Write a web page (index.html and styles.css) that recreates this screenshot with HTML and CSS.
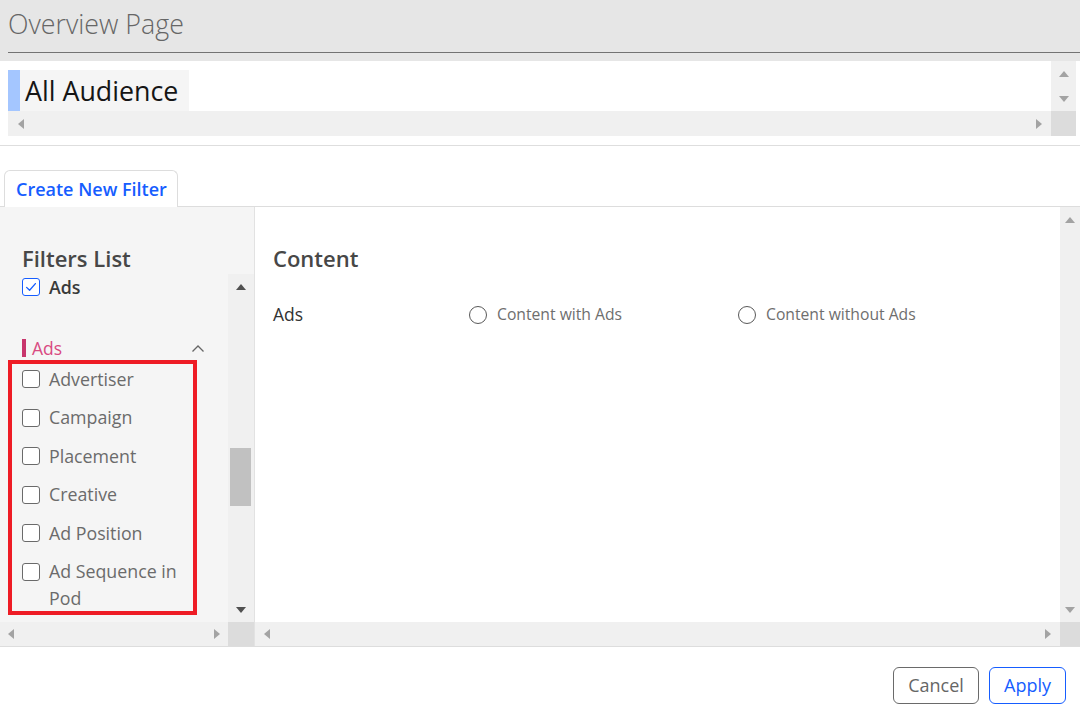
FILE: index.html
```html
<!DOCTYPE html>
<html lang="en">
<head>
<meta charset="utf-8">
<title>Overview Page</title>
<link rel="stylesheet" href="styles.css">
</head>
<body>
<header class="page-head">
  <h1 class="page-title">Overview Page</h1>
</header>

<section class="scroller audience">
  <div class="audience-view"><span class="tag">All Audience</span></div>
  <div class="vbar">
    <span class="btn btn-v"><i class="arrow up"></i></span>
    <span class="btn btn-v"><i class="arrow down"></i></span>
  </div>
  <div class="hbar">
    <span class="btn btn-h"><i class="arrow left"></i></span>
    <span class="btn btn-h"><i class="arrow right"></i></span>
  </div>
  <div class="corner"></div>
</section>

<div class="divider"></div>

<nav class="tabs">
  <button class="tab" type="button">Create New Filter</button>
</nav>

<div class="panel">
  <aside class="sidebar">
    <h2 class="section-title">Filters List</h2>
    <div class="scroller side-scroller">
      <div class="side-list">
        <label class="check-row selected">
          <span class="box checked"><svg viewBox="0 0 18 18" width="18" height="18"><path d="M4.6 9.4 L7.6 12.3 L13.4 5.6" fill="none" stroke="#165dff" stroke-width="1.3" stroke-linecap="round" stroke-linejoin="round"/></svg></span>
          <span class="check-text">Ads</span>
        </label>

        <div class="group-head">
          <span class="group-name">Ads</span>
          <svg class="chevron" viewBox="0 0 14 9" width="14" height="9"><polyline points="1.5,7.5 7,2 12.5,7.5" fill="none" stroke="#666" stroke-width="1.3"/></svg>
        </div>

        <ul class="options">
          <li class="check-row"><span class="box"></span><span class="check-text">Advertiser</span></li>
          <li class="check-row"><span class="box"></span><span class="check-text">Campaign</span></li>
          <li class="check-row"><span class="box"></span><span class="check-text">Placement</span></li>
          <li class="check-row"><span class="box"></span><span class="check-text">Creative</span></li>
          <li class="check-row"><span class="box"></span><span class="check-text">Ad Position</span></li>
          <li class="check-row"><span class="box"></span><span class="check-text">Ad Sequence in Pod</span></li>
        </ul>
      </div>
      <div class="vbar side-vbar">
        <span class="btn btn-v"><i class="arrow up dark"></i></span>
        <span class="track"><span class="thumb"></span></span>
        <span class="btn btn-v"><i class="arrow down dark"></i></span>
      </div>
      <div class="hbar">
        <span class="btn btn-h"><i class="arrow left"></i></span>
        <span class="btn btn-h"><i class="arrow right"></i></span>
      </div>
      <div class="corner"></div>
    </div>
    <div class="highlight"></div>
  </aside>

  <main class="scroller main-scroller">
    <div class="main-view">
      <h2 class="section-title">Content</h2>
      <div class="field-row">
        <span class="field-label">Ads</span>
        <label class="radio-opt"><span class="radio"></span>Content with Ads</label>
        <label class="radio-opt"><span class="radio"></span>Content without Ads</label>
      </div>
    </div>
    <div class="vbar main-vbar">
      <span class="btn btn-v"><i class="arrow up"></i></span>
      <span class="btn btn-v"><i class="arrow down"></i></span>
    </div>
    <div class="hbar">
      <span class="btn btn-h"><i class="arrow left"></i></span>
      <span class="btn btn-h"><i class="arrow right"></i></span>
    </div>
    <div class="corner"></div>
  </main>
</div>

<footer class="actions">
  <button class="action cancel" type="button">Cancel</button>
  <button class="action apply" type="button">Apply</button>
</footer>
</body>
</html>
```

FILE: styles.css
```css
* {
  box-sizing: border-box;
}

html, body {
  margin: 0;
  padding: 0;
  background: #fff;
}

body {
  width: 1080px;
  height: 712px;
  overflow: hidden;
  font-family: "Open Sans", "Noto Sans", sans-serif;
  color: #333;
}

button {
  font-family: inherit;
  cursor: pointer;
}

/* ---------- page heading ---------- */
.page-head {
  height: 61px;
  background: #e6e6e6;
  padding-left: 8px;
}

.page-title {
  margin: 0;
  height: 53px;
  border-bottom: 1px solid #737373;
  font-size: 26.8px;
  font-weight: 300;
  line-height: 48px;
  color: #666;
}

/* ---------- generic scroll frame ---------- */
.scroller {
  display: grid;
}

.vbar {
  background: #f0f0f0;
  display: flex;
  flex-direction: column;
  justify-content: space-between;
}

.hbar {
  background: #f0f0f0;
  display: flex;
  justify-content: space-between;
}

.corner {
  background: #dcdcdc;
}

.btn {
  display: flex;
  align-items: center;
  justify-content: center;
}

.btn-v {
  height: 25px;
}

.btn-h {
  width: 24px;
}

.arrow {
  display: block;
  width: 0;
  height: 0;
  border: 0 solid transparent;
}

.arrow.up {
  border-width: 0 5.5px 6px;
  border-bottom-color: #a3a3a3;
}

.arrow.down {
  border-width: 6px 5.5px 0;
  border-top-color: #a3a3a3;
}

.arrow.left {
  border-width: 5.5px 6px 5.5px 0;
  border-right-color: #a3a3a3;
}

.arrow.right {
  border-width: 5.5px 0 5.5px 6px;
  border-left-color: #a3a3a3;
}

.arrow.up.dark {
  border-bottom-color: #505050;
}

.arrow.down.dark {
  border-top-color: #505050;
}

/* ---------- audience selector ---------- */
.audience {
  margin: 0 4px 0 8px;
  height: 75px;
  grid-template-columns: 1fr 25px;
  grid-template-rows: 50px 25px;
}

.audience-view {
  background: #fff;
  padding-top: 9px;
}

.tag {
  display: inline-block;
  height: 41px;
  padding: 0 11px 0 5px;
  border-left: 12px solid #a4c6ff;
  background: #f5f5f5;
  font-size: 26.8px;
  line-height: 41px;
  color: #151515;
}

.audience .hbar .btn-h {
  width: 25px;
}

.divider {
  margin-top: 9px;
  height: 1px;
  background: #dedede;
}

/* ---------- tabs ---------- */
.tabs {
  margin-top: 24px;
  padding-left: 4px;
  border-bottom: 1px solid #dddddd;
  height: 37px;
  display: flex;
}

.tab {
  width: 174px;
  height: 37px;
  padding: 0 0 0 11px;
  text-align: left;
  border: 1px solid #dddddd;
  border-bottom: 0;
  border-radius: 6px 6px 0 0;
  background: #fff;
  font-size: 18px;
  font-weight: 600;
  color: #165dff;
  line-height: 33px;
}

/* ---------- filter panel ---------- */
.panel {
  height: 439px;
  display: flex;
}

.sidebar {
  position: relative;
  width: 255px;
  flex: none;
  background: #f5f5f5;
  border-right: 1px solid #e2e2e2;
  display: flex;
  flex-direction: column;
}

.section-title {
  margin: 0;
  font-size: 22px;
  font-weight: 600;
  line-height: 28px;
  color: #474747;
}

.sidebar > .section-title {
  padding: 37px 0 0 22px;
  height: 67px;
}

.side-scroller {
  height: 372px;
  grid-template-columns: 1fr 26px;
  grid-template-rows: 1fr 24px;
}

.side-list {
  padding: 0 22px 0 22px;
  overflow: hidden;
}

.check-row {
  display: flex;
  align-items: flex-start;
  gap: 9px;
  font-size: 17.8px;
  line-height: 27px;
  color: #6b6b6b;
}

.box {
  flex: none;
  width: 18px;
  height: 18px;
  margin-top: 4.5px;
  border: 1px solid #6a6a6a;
  border-radius: 3px;
  background: #fff;
  display: flex;
}

.box.checked {
  border-color: #165dff;
}

.box svg {
  margin: -1px;
}

.check-row.selected {
  line-height: 26px;
  color: #3a3a3a;
  font-weight: 600;
}

.check-row.selected .box {
  margin-top: 4px;
}

.group-head {
  margin-top: 35px;
  display: flex;
  align-items: center;
  justify-content: space-between;
  height: 26px;
}

.group-name {
  border-left: 4px solid #c8356c;
  padding-left: 6px;
  height: 18px;
  line-height: 18px;
  font-size: 17.5px;
  color: #d94a81;
}

.chevron {
  margin-right: 1px;
}

.options {
  list-style: none;
  margin: 4.5px 0 0;
  padding: 0;
  display: flex;
  flex-direction: column;
  gap: 11.6px;
}

.track {
  flex: 1;
  padding: 149px 3px 0 2px;
}

.thumb {
  display: block;
  height: 58px;
  background: #c1c1c1;
}

.side-scroller .btn-h {
  width: 22px;
}

.highlight {
  position: absolute;
  left: 8px;
  top: 153px;
  width: 189px;
  height: 255px;
  border: 4px solid #ee1c25;
  pointer-events: none;
}

/* ---------- main area ---------- */
.main-scroller {
  flex: 1;
  height: 439px;
  grid-template-columns: 1fr 20px;
  grid-template-rows: 1fr 24px;
}

.main-view {
  padding: 37px 0 0 18px;
  background: #fff;
}

.field-row {
  margin-top: 29px;
  display: flex;
  align-items: center;
  height: 26px;
}

.field-label {
  width: 196px;
  font-size: 17.5px;
  color: #333;
}

.radio-opt {
  width: 269px;
  display: flex;
  align-items: center;
  gap: 10px;
  font-size: 15.7px;
  color: #6e6e6e;
}

.radio {
  width: 18px;
  height: 18px;
  border: 1px solid #595959;
  border-radius: 50%;
  margin-top: 2px;
  background: #fff;
}

/* ---------- footer actions ---------- */
.actions {
  border-top: 1px solid #dddddd;
  padding: 20px 14px 0 0;
  display: flex;
  justify-content: flex-end;
  gap: 10px;
}

.action {
  height: 37px;
  padding: 0 14px;
  border-radius: 6px;
  background: #fff;
  font-size: 18px;
  line-height: 33px;
}

.cancel {
  width: 86px;
  border: 1px solid #6a6a6a;
  color: #666;
}

.apply {
  width: 77px;
  border: 1px solid #165dff;
  color: #165dff;
}
```
